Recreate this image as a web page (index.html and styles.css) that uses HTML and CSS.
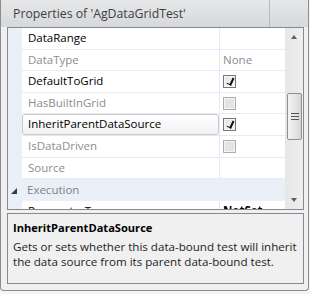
FILE: index.html
```html
<!DOCTYPE html>
<html lang="en">
<head>
    <meta charset="UTF-8" />
    <title>Properties of 'AgDataGridTest'</title>
    <link rel="stylesheet" href="styles.css">
</head>
<body>
<div class="window">
    <div class="titlebar">
        <span class="title">Properties of 'AgDataGridTest'</span>
        <span class="title-end"></span>
    </div>

    <div class="grid">
        <div class="rows">
            <div class="row">
                <div class="margin"></div>
                <div class="name">DataRange</div>
                <div class="value"></div>
            </div>
            <div class="row">
                <div class="margin"></div>
                <div class="name readonly">DataType</div>
                <div class="value readonly">None</div>
            </div>
            <div class="row">
                <div class="margin"></div>
                <div class="name">DefaultToGrid</div>
                <div class="value"><span class="check checked"></span></div>
            </div>
            <div class="row">
                <div class="margin"></div>
                <div class="name readonly">HasBuiltInGrid</div>
                <div class="value"><span class="check disabled"></span></div>
            </div>
            <div class="row">
                <div class="margin"></div>
                <div class="name"><div class="selected">InheritParentDataSource</div></div>
                <div class="value"><span class="check checked"></span></div>
            </div>
            <div class="row">
                <div class="margin"></div>
                <div class="name readonly">IsDataDriven</div>
                <div class="value"><span class="check disabled"></span></div>
            </div>
            <div class="row">
                <div class="margin"></div>
                <div class="name readonly">Source</div>
                <div class="value"></div>
            </div>
            <div class="row category">
                <span class="expander"></span>
                <span class="category-name">Execution</span>
            </div>
            <div class="row">
                <div class="margin"></div>
                <div class="name">ParameterType</div>
                <div class="value bold">NotSet</div>
            </div>
        </div>

        <div class="scrollbar">
            <div class="arrow up"></div>
            <div class="track-top"></div>
            <div class="thumb"><span class="grip"></span></div>
            <div class="track-rest"></div>
            <div class="arrow down"></div>
        </div>
    </div>

    <div class="description">
        <div class="desc-title">InheritParentDataSource</div>
        <div class="desc-text">Gets or sets whether this data-bound test will inherit the data source from its parent data-bound test.</div>
    </div>
</div>
</body>
</html>
```

FILE: styles.css
```css
/* Base */
* {
    box-sizing: border-box;
}
body {
    margin: 0;
    width: 310px;
    height: 294px;
    overflow: hidden;
    background: #f4f4f4;
    font-family: 'Segoe UI', 'Open Sans', 'Noto Sans', sans-serif;
    font-size: 11px;
    color: #000;
}

/* Window frame */
.window {
    width: 309px;
    height: 291px;
    background: #f0f0f0;
    border: 1px solid #8c8c8c;
    border-top: none;
    border-radius: 0 0 4px 4px;
    padding: 0 4px 6px 6px;
    display: flex;
    flex-direction: column;
}
.titlebar {
    height: 27px;
    margin: 0 -4px 0 -6px;
    display: flex;
    background: linear-gradient(#e6e7e9, #d7d8da);
}
.title {
    flex: 1;
    padding-left: 12px;
    line-height: 27px;
    font-size: 12.3px;
    color: #3e3e3e;
}
.title-end {
    width: 39px;
    border-left: 1px solid #b9bbbe;
}

/* Property grid */
.grid {
    height: 183px;
    display: flex;
    border: 1px solid #838a92;
    background: #fff;
}
.rows {
    flex: 1;
    overflow: hidden;
}
.row {
    height: 21.6px;
    display: grid;
    grid-template-columns: 14px 198px 1fr;
}
.margin {
    background: #e9f0f8;
}
.name,
.value {
    border-bottom: 1px solid #e2ebf6;
    line-height: 20px;
    white-space: nowrap;
    overflow: hidden;
    font-size: 11.5px;
}
.name {
    padding-left: 6px;
    border-right: 1px solid #e2ebf6;
}
.value {
    padding-left: 3px;
    display: flex;
    align-items: center;
}
.readonly {
    color: #8d8d8d;
}
.bold {
    font-weight: 700;
}
.name .selected {
    margin-left: -6px;
    height: 100%;
    padding-left: 5px;
    border: 1px solid #cacaca;
    border-radius: 3px;
    background: linear-gradient(#ffffff, #f2f2f2);
    line-height: 18px;
}

/* Checkboxes */
.check {
    width: 13px;
    height: 13px;
    border: 1px solid #777;
    background: linear-gradient(135deg, #e2e2e2, #fafafa);
    box-shadow: inset 0 0 0 1px #f6f6f6;
    position: relative;
}
.check.disabled {
    border-color: #adadad;
    background: #e4e4e4;
    box-shadow: inset 0 0 0 1px #f4f4f4;
}
.check.checked::after {
    content: "";
    position: absolute;
    left: 4px;
    top: 1px;
    width: 3px;
    height: 7px;
    border: solid #111;
    border-width: 0 2px 1.5px 0;
    transform: rotate(25deg);
}

/* Category row */
.row.category {
    display: flex;
    align-items: center;
    background: #e9f0f8;
}
.expander {
    width: 0;
    height: 0;
    margin: 2px 0 0 3px;
    border-style: solid;
    border-width: 0 0 6px 6px;
    border-color: transparent transparent #3a3a3a transparent;
}
.category-name {
    margin-left: 10px;
    font-size: 11.5px;
    color: #808080;
}

/* Scrollbar */
.scrollbar {
    width: 18px;
    display: flex;
    flex-direction: column;
    background: linear-gradient(90deg, #e6e6e6, #efefef);
}
.arrow {
    height: 18px;
    display: flex;
    justify-content: center;
    align-items: center;
}
.arrow::before {
    content: "";
    border-style: solid;
    border-color: transparent;
}
.arrow.up::before {
    border-width: 0 3.5px 4px 3.5px;
    border-bottom-color: #5e5e5e;
}
.arrow.down::before {
    border-width: 4px 3.5px 0 3.5px;
    border-top-color: #5e5e5e;
}
.track-top {
    height: 47px;
}
.thumb {
    height: 47px;
    margin: 0 1px 0 2px;
    border: 1px solid #8e8f8f;
    border-radius: 2px;
    background: linear-gradient(90deg, #f3f3f3, #e6e6e6 55%, #d4d4d4);
    display: flex;
    justify-content: center;
    align-items: center;
}
.grip {
    width: 8px;
    height: 7px;
    background: repeating-linear-gradient(#555 0 1px, transparent 1px 3px);
}
.track-rest {
    flex: 1;
}

/* Splitter and description */
.description {
    margin-top: 3px;
    flex: 1;
    border: 1px solid #838a92;
    padding: 5px 5px 0;
    background: #f0f0f0;
}
.desc-title {
    font-size: 11.1px;
    font-weight: 700;
    line-height: 18px;
}
.desc-text {
    margin-top: 2px;
    font-size: 11.6px;
    line-height: 15px;
    color: #1e1e1e;
}
```
